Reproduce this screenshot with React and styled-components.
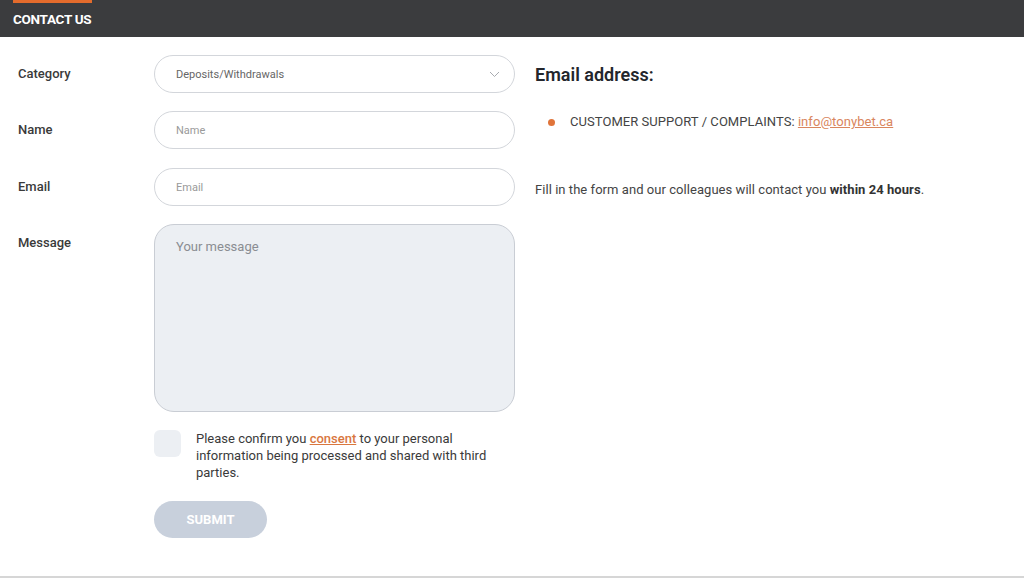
import React from "react";
import styled, { createGlobalStyle } from "styled-components";

const Global = createGlobalStyle`
  html, body { margin: 0; padding: 0; background: #fff; }
  body { font-family: Roboto, "Liberation Sans", Arial, sans-serif; color: #333; }
  * { box-sizing: border-box; }
`;

const Page = styled.div`
  width: 1024px;
  height: 578px;
  display: flex;
  flex-direction: column;
  background: #fff;
  border-bottom: 2px solid #d6d6d6;
`;

const Header = styled.div`
  height: 37px;
  background: #3b3c3e;
  padding: 0 13px;
  display: flex;
  flex-direction: column;
`;

const Accent = styled.div`
  width: 79px;
  height: 3px;
  background: #e36b2c;
`;

const Title = styled.h1`
  margin: 8px 0 0;
  font-size: 13.5px;
  line-height: 16px;
  font-weight: 700;
  color: #fff;
  letter-spacing: -0.3px;
`;

const Body = styled.div`
  flex: 1;
  display: flex;
  padding: 18px 0 0 18px;
  gap: 20px;
`;

const Form = styled.div`
  width: 497px;
  display: flex;
  flex-direction: column;
`;

const Row = styled.div`
  display: grid;
  grid-template-columns: 136px 361px;
  margin-bottom: ${(p) => p.$mb ?? 18}px;
`;

const Label = styled.label`
  font-size: 13px;
  font-weight: 500;
  color: #3a3a3a;
  padding-top: 11px;
  line-height: 16px;
`;

const Field = styled.div`
  position: relative;
  height: 38px;
  border: 1px solid #d3d6db;
  border-radius: 19px;
  padding: 0 21px;
  display: flex;
  align-items: center;
  font-size: 11px;
  color: ${(p) => (p.$value ? "#666" : "#9a9a9a")};
  background: #fff;
`;

const Chevron = styled.svg`
  position: absolute;
  right: 14px;
  top: 15px;
`;

const TextArea = styled.div`
  height: 188px;
  border: 1px solid #c9cdd4;
  border-radius: 20px;
  background: #eceff3;
  padding: 14px 21px;
  font-size: 13px;
  color: #8a8d92;
  line-height: 16px;
`;

const ConsentRow = styled.div`
  margin-left: 136px;
  display: flex;
  gap: 15px;
  margin-bottom: 20px;
`;

const Check = styled.div`
  width: 27px;
  height: 27px;
  border-radius: 6px;
  background: #eceff3;
  flex-shrink: 0;
`;

const ConsentText = styled.p`
  margin: 0;
  width: 310px;
  font-size: 13px;
  line-height: 17px;
  color: #3a3a3a;
`;

const OrangeLink = styled.a`
  color: #d9773f;
  text-decoration: underline;
  font-weight: 500;
`;

const Submit = styled.button`
  margin-left: 136px;
  width: 113px;
  height: 37px;
  border: none;
  border-radius: 19px;
  background: #c8d0dc;
  color: #fff;
  font-family: inherit;
  font-size: 13px;
  font-weight: 700;
  text-transform: uppercase;
`;

const Info = styled.div`
  display: flex;
  flex-direction: column;
  padding-top: 9px;
`;

const Heading = styled.h2`
  margin: 0;
  font-size: 18px;
  line-height: 22px;
  font-weight: 600;
  color: #23262c;
`;

const List = styled.ul`
  margin: 28px 0 0;
  padding: 0 0 0 13px;
  list-style: none;
`;

const Item = styled.li`
  display: flex;
  align-items: center;
  gap: 15px;
  font-size: 13px;
  line-height: 16px;
  color: #444;
  text-transform: uppercase;
  letter-spacing: 0.05px;
`;

const Dot = styled.span`
  width: 7px;
  height: 7px;
  border-radius: 50%;
  background: #e0743a;
`;

const Mail = styled.a`
  color: #d9865e;
  text-decoration: underline;
  text-transform: none;
`;

const Note = styled.p`
  margin: 52px 0 0;
  font-size: 13px;
  line-height: 16px;
  color: #444;
  letter-spacing: 0.05px;
  b { color: #333; font-weight: 700; }
`;

export default function App() {
  return (
    <>
      <Global />
      <Page>
        <Header>
          <Accent />
          <Title>CONTACT US</Title>
        </Header>
        <Body>
          <Form>
            <Row>
              <Label>Category</Label>
              <Field $value>
                Deposits/Withdrawals
                <Chevron width="11" height="7" viewBox="0 0 11 7">
                  <path d="M1 1l4.5 4.5L10 1" fill="none" stroke="#a8abb0" strokeWidth="1" />
                </Chevron>
              </Field>
            </Row>
            <Row $mb={19}>
              <Label>Name</Label>
              <Field>Name</Field>
            </Row>
            <Row>
              <Label>Email</Label>
              <Field>Email</Field>
            </Row>
            <Row $mb={18}>
              <Label>Message</Label>
              <TextArea>Your message</TextArea>
            </Row>
            <ConsentRow>
              <Check />
              <ConsentText>
                Please confirm you <OrangeLink>consent</OrangeLink> to your personal information being processed and shared with third parties.
              </ConsentText>
            </ConsentRow>
            <Submit>Submit</Submit>
          </Form>
          <Info>
            <Heading>Email address:</Heading>
            <List>
              <Item>
                <Dot />
                <span>
                  Customer support / complaints: <Mail>info@tonybet.ca</Mail>
                </span>
              </Item>
            </List>
            <Note>
              Fill in the form and our colleagues will contact you <b>within 24 hours</b>.
            </Note>
          </Info>
        </Body>
      </Page>
    </>
  );
}
